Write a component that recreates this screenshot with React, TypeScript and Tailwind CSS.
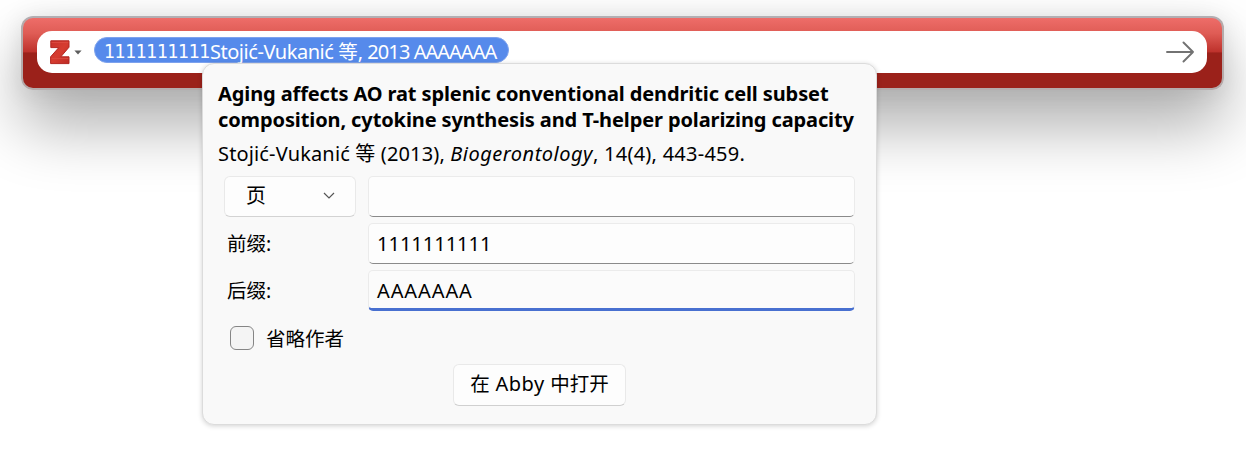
import type { ReactNode } from "react";

function ZoteroMark() {
  return (
    <svg width="20" height="25" viewBox="0 0 20 25" aria-hidden="true">
      <defs>
        <linearGradient id="mark" x1="0" y1="0" x2="1" y2="1">
          <stop offset="0" stopColor="#c9332b" />
          <stop offset="0.5" stopColor="#d63c30" />
          <stop offset="1" stopColor="#bd2a24" />
        </linearGradient>
      </defs>
      <path d="M.8.8H19v6.4L10.800 16.800H19v6.800H.6v-6.800L8.800 7.600H.8z" fill="url(#mark)" stroke="#b32620" strokeWidth="1" />
      <path d="M1.500 2.500h16.800M1.500 18.600h16.800" stroke="#dd4b41" strokeWidth="0.9" />
    </svg>
  );
}

function Field({ children, active = false }: { children?: ReactNode; active?: boolean }) {
  return (
    <div
      className={
        active
          ? "flex h-[41px] w-[487px] items-center overflow-hidden rounded-[5px] border border-b-[3px] border-[#ebebeb] border-b-[#4870d0] bg-[#fbfbfb] px-[8px] pt-[2px] tracking-[0.9px]"
          : "flex h-[41px] w-[487px] items-center overflow-hidden rounded-[5px] border border-[#ebebeb] border-b-[#8a8a8a] bg-[#fdfdfd] px-[8px]"
      }
    >
      {children}
    </div>
  );
}

export default function App() {
  return (
    <div className="relative h-[459px] w-[1246px] overflow-hidden bg-white px-[21px] pt-[16px] font-['Noto_Sans','Noto_Sans_CJK_SC',sans-serif] text-black">
      <div className="h-[74px] w-[1203px] rounded-[12px] border-2 border-[#b5abab] border-t-[#b2aeb2] bg-[linear-gradient(180deg,#ee6d69_0%,#df5c55_22%,#bd312b_49%,#9b211a_49.5%,#9b211a_100%)] px-[14px] pt-[13px] shadow-[0_35px_64px_rgba(0,0,0,0.33),0_2px_24px_rgba(0,0,0,0.1)]">
        <div className="flex h-[42px] w-[1170px] items-center rounded-[15px] bg-white pr-[13px] pl-[13px]">
          <ZoteroMark />
          <svg className="ml-[4px]" width="8" height="5" viewBox="0 0 8 5" aria-hidden="true">
            <path d="M.4.5h7.2L4 4.6z" fill="#5d5d5d" />
          </svg>
          <div className="-mt-[4px] ml-[12px] flex h-[26px] w-[415px] items-center rounded-full border border-[#7da2ed] bg-[#568aeb] pt-[3px] pl-[9px] text-[20px] leading-[26px] whitespace-pre text-white">
            <span className="font-['DejaVu_Sans_Condensed','DejaVu_Sans',sans-serif] text-[19.5px] tracking-[-0.57px] [font-stretch:condensed]">1111111111</span>
            <span className="tracking-[-0.45px]">Stojić-Vukanić </span>
            <span className="text-[19.5px]">等</span>
            <span className="tracking-[-0.5px]">, </span>
            <span className="tracking-[-0.9px]">2013 </span>
            <span className="tracking-[-1px]">AAAAAAA</span>
          </div>
          <svg className="ml-auto" width="28" height="22" viewBox="0 0 28 22" aria-hidden="true">
            <path d="M1 11h26M17.500 1.500 27 11l-9.500 9.500" fill="none" stroke="#727272" strokeWidth="1.900" strokeLinecap="round" strokeLinejoin="round" />
          </svg>
        </div>
      </div>

      <div className="absolute top-[63px] left-[202px] h-[362px] w-[675px] rounded-[12px] border border-[#dcdcdc] bg-[#f9f9f9] px-[15px] pt-[17px] shadow-[0_1px_5px_rgba(0,0,0,0.18)]">
        <h1 className="text-[20px] leading-[26px] font-bold tracking-[-0.11px] whitespace-nowrap">
          <span className="block">Aging affects AO rat splenic conventional dendritic cell subset</span>
          <span className="block">composition, cytokine synthesis and T-helper polarizing capacity</span>
        </h1>
        <p className="mt-[7px] text-[20px] leading-[28px] tracking-[0.15px] whitespace-nowrap">
          Stojić-Vukanić 等 (2013), <i className="tracking-[0.5px]">Biogerontology</i>
          <span className="tracking-[0.25px]">, 14(4), 443-459.</span>
        </p>
        <div className="mt-[8px] grid grid-cols-[144px_487px] gap-x-[6px] gap-y-[6px] text-[20px]">
          <div className="ml-[6px] flex h-[41px] w-[132px] items-center justify-between rounded-[6px] border border-[#e9e9e9] border-b-[#d3d3d3] bg-[#fdfdfd] pr-[20px] pb-[2px] pl-[21px]">
            <span>页</span>
            <svg width="12" height="8" viewBox="0 0 12 8" aria-hidden="true">
              <path d="m1 1 5 5 5-5" fill="none" stroke="#555" strokeWidth="1.200" />
            </svg>
          </div>
          <Field />
          <span className="self-center pl-[9px] text-[19.5px]">前缀:</span>
          <Field>1111111111</Field>
          <span className="self-center pl-[9px] text-[19.5px]">后缀:</span>
          <Field active>AAAAAAA</Field>
        </div>
        <label className="mt-[14px] ml-[12px] flex h-[26px] items-center gap-[12px] text-[19.5px]">
          <span className="size-[24px] rounded-[6px] border-[1.500px] border-[#858585] bg-[#f4f4f4]" />
          <span className="pt-[2px]">省略作者</span>
        </label>
        <button className="mt-[13px] ml-[235px] flex h-[42px] w-[173px] items-center justify-center rounded-[6px] border border-[#e9e9e9] border-b-[#d0d0d0] bg-[#fdfdfd] pb-[2px] text-[20px] whitespace-pre">
          <span className="text-[19.5px]">在</span>
          <span className="tracking-[0.5px]"> Abby </span>
          <span className="text-[19.5px]">中打开</span>
        </button>
      </div>
    </div>
  );
}
